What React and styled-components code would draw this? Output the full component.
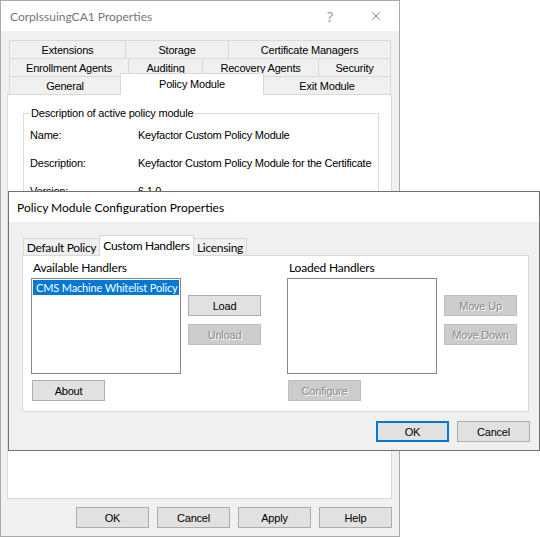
import React from "react";
import styled, { createGlobalStyle } from "styled-components";

const GlobalStyle = createGlobalStyle`
  html, body {
    margin: 0;
    padding: 0;
    background: #ffffff;
  }
  body {
    font-family: "Liberation Sans", Arial, sans-serif;
    font-size: 11px;
    letter-spacing: -0.2px;
    color: #000000;
  }
  *, *::before, *::after {
    box-sizing: border-box;
  }
`;

const uiFont = `"Lato", "Noto Sans", sans-serif`;
const formFont = `"Liberation Sans", Arial, sans-serif`;

const Desktop = styled.div`
  position: relative;
  width: 540px;
  height: 537px;
  overflow: hidden;
  background: #ffffff;
`;

const Window = styled.div`
  position: absolute;
  left: ${(p) => p.$x}px;
  top: ${(p) => p.$y}px;
  width: ${(p) => p.$w}px;
  height: ${(p) => p.$h}px;
  border: 1px solid ${(p) => (p.$active ? "#707070" : "#aaaaaa")};
  background: #f0f0f0;
  display: flex;
  flex-direction: column;
`;

const TitleBar = styled.div`
  flex: none;
  height: 30px;
  display: flex;
  align-items: center;
  padding-left: ${(p) => p.$indent}px;
  background: #ffffff;
  font-family: ${uiFont};
  font-size: 12px;
  letter-spacing: 0;
  color: ${(p) => (p.$active ? "#000000" : "#767676")};
`;

const TitleText = styled.span`
  flex: 1;
  white-space: nowrap;
`;

const CaptionButton = styled.div`
  width: 46px;
  height: 30px;
  display: flex;
  align-items: center;
  justify-content: center;
  color: #9a9a9a;
  font-family: "Noto Sans", sans-serif;
  font-size: 14px;
`;

const BackBody = styled.div`
  flex: 1;
  display: flex;
  flex-direction: column;
  padding: 9px 7px 8px 6px;
`;

const TabRows = styled.div`
  display: flex;
  flex-direction: column;
  margin: 0 1px 0 2px;
`;

const TabRow = styled.div`
  display: flex;
  align-items: flex-end;
  height: 18px;
`;

const Tab = styled.div`
  flex: ${(p) => (p.$w ? `0 0 ${p.$w}px` : "1 1 auto")};
  height: ${(p) => (p.$selected ? p.$h + 4 : p.$h)}px;
  margin-left: -1px;
  margin-bottom: ${(p) => (p.$selected ? -1 : 0)}px;
  padding-bottom: ${(p) => (p.$selected ? 2 : 0)}px;
  position: relative;
  z-index: ${(p) => (p.$selected ? 1 : 0)};
  display: flex;
  align-items: center;
  justify-content: center;
  overflow: hidden;
  border: 1px solid #d9d9d9;
  border-bottom: none;
  background: ${(p) => (p.$selected ? "#ffffff" : "#f0f0f0")};
  white-space: nowrap;
  font-family: ${(p) => (p.$ui ? uiFont : formFont)};
  font-size: ${(p) => (p.$ui ? 12 : 11)}px;
  letter-spacing: ${(p) => (p.$ui ? -0.3 : -0.2)}px;

  &:first-child {
    margin-left: 0;
  }
`;

const Panel = styled.div`
  flex: none;
  height: ${(p) => p.$h}px;
  background: #ffffff;
  border: 1px solid #d9d9d9;
  overflow: hidden;
  display: flex;
  flex-direction: column;
`;

const Group = styled.fieldset`
  margin: 12px 12px 0 15px;
  padding: 0 6px;
  height: 240px;
  min-width: 0;
  border: 1px solid #dcdcdc;
`;

const GroupLegend = styled.legend`
  padding: 0 1px;
  line-height: 13px;
`;

const InfoRow = styled.div`
  display: grid;
  grid-template-columns: 108px 1fr;
  line-height: 13px;
  margin-top: 15px;

  &:first-of-type {
    margin-top: 9px;
  }
`;

const InfoValue = styled.span`
  white-space: nowrap;
  letter-spacing: -0.25px;
`;

const ButtonRow = styled.div`
  display: flex;
  justify-content: flex-end;
  gap: 8px;
  margin-top: ${(p) => p.$top}px;
  margin-right: ${(p) => p.$right || 0}px;
`;

const Button = styled.button`
  flex: none;
  width: 73px;
  height: 21px;
  padding: 0;
  font-family: ${formFont};
  font-size: 11px;
  letter-spacing: -0.2px;
  background: ${(p) => (p.disabled ? "#cccccc" : "#e1e1e1")};
  border: ${(p) =>
    p.$primary ? "2px solid #0078d7" : `1px solid ${p.disabled ? "#bfbfbf" : "#adadad"}`};
  color: ${(p) => (p.disabled ? "#8b8b8b" : "#000000")};
  text-shadow: ${(p) => (p.disabled ? "1px 1px 0 #ffffff" : "none")};
`;

const FrontBody = styled.div`
  flex: 1;
  display: flex;
  flex-direction: column;
  padding: 13px 10px 8px 13px;
`;

const FrontTabs = styled.div`
  display: flex;
  align-items: flex-end;
  height: 20px;
  padding-left: 1px;
`;

const HandlerPane = styled.div`
  display: flex;
  gap: 26px;
  padding: 4px 0 0 8px;
`;

const HandlerSection = styled.div`
  display: flex;
  gap: 7px;
`;

const HandlerColumn = styled.div`
  display: flex;
  flex-direction: column;
  width: 150px;
`;

const HandlerLabel = styled.div`
  height: 16px;
  line-height: 16px;
  margin: 0 0 2px 2px;
  font-family: ${uiFont};
  font-size: 12px;
  letter-spacing: -0.2px;
  white-space: nowrap;
`;

const ListBox = styled.div`
  height: 96px;
  padding: 1px;
  background: #ffffff;
  border: 1px solid #828790;
`;

const ListItem = styled.div`
  height: 15px;
  line-height: 15px;
  padding-left: 3px;
  background: #0078d7;
  color: #ffffff;
  font-family: ${uiFont};
  font-size: 11px;
  letter-spacing: -0.15px;
  white-space: nowrap;
  overflow: hidden;
`;

const SideButtons = styled.div`
  display: flex;
  flex-direction: column;
  gap: 8px;
  padding-top: 35px;
`;

const UnderListButton = styled(Button)`
  margin: 6px 0 0 1px;
`;

const CloseGlyph = () => (
  <svg width="10" height="10" viewBox="0 0 10 10">
    <path d="M0.5 0.5 L9.5 9.5 M9.5 0.5 L0.5 9.5" stroke="#9a9a9a" strokeWidth="1" fill="none" />
  </svg>
);

const backTabs = [
  [
    { label: "Extensions", w: 117 },
    { label: "Storage", w: 104 },
    { label: "Certificate Managers" },
  ],
  [
    { label: "Enrollment Agents", w: 120 },
    { label: "Auditing", w: 75 },
    { label: "Recovery Agents", w: 117 },
    { label: "Security" },
  ],
  [
    { label: "General", w: 112 },
    { label: "Policy Module", w: 144, selected: true },
    { label: "Exit Module" },
  ],
];

const info = [
  ["Name:", "Keyfactor Custom Policy Module"],
  ["Description:", "Keyfactor Custom Policy Module for the Certificate"],
  ["Version:", "6.1.0"],
];

export default function App() {
  return (
    <Desktop>
      <GlobalStyle />
      <Window $x={0} $y={0} $w={400} $h={537}>
        <TitleBar $indent={9}>
          <TitleText>CorpIssuingCA1 Properties</TitleText>
          <CaptionButton>?</CaptionButton>
          <CaptionButton>
            <CloseGlyph />
          </CaptionButton>
        </TitleBar>
        <BackBody>
          <TabRows>
            {backTabs.map((row, i) => (
              <TabRow key={i}>
                {row.map((t) => (
                  <Tab key={t.label} $w={t.w} $h={18} $selected={t.selected}>
                    {t.label}
                  </Tab>
                ))}
              </TabRow>
            ))}
          </TabRows>
          <Panel $h={405}>
            <Group>
              <GroupLegend>Description of active policy module</GroupLegend>
              {info.map(([k, v]) => (
                <InfoRow key={k}>
                  <span>{k}</span>
                  <InfoValue>{v}</InfoValue>
                </InfoRow>
              ))}
            </Group>
          </Panel>
          <ButtonRow $top={8}>
            <Button>OK</Button>
            <Button>Cancel</Button>
            <Button>Apply</Button>
            <Button>Help</Button>
          </ButtonRow>
        </BackBody>
      </Window>

      <Window $x={8} $y={191} $w={532} $h={260} $active>
        <TitleBar $indent={8} $active>
          <TitleText>Policy Module Configuration Properties</TitleText>
        </TitleBar>
        <FrontBody>
          <FrontTabs>
            <Tab $ui $w={77} $h={17}>Default Policy</Tab>
            <Tab $ui $w={95} $h={17} $selected>Custom Handlers</Tab>
            <Tab $ui $w={54} $h={17}>Licensing</Tab>
          </FrontTabs>
          <Panel $h={157}>
            <HandlerPane>
              <HandlerSection>
                <HandlerColumn>
                  <HandlerLabel>Available Handlers</HandlerLabel>
                  <ListBox>
                    <ListItem>CMS Machine Whitelist Policy</ListItem>
                  </ListBox>
                  <UnderListButton>About</UnderListButton>
                </HandlerColumn>
                <SideButtons>
                  <Button>Load</Button>
                  <Button disabled>Unload</Button>
                </SideButtons>
              </HandlerSection>
              <HandlerSection>
                <HandlerColumn>
                  <HandlerLabel>Loaded Handlers</HandlerLabel>
                  <ListBox />
                  <UnderListButton disabled>Configure</UnderListButton>
                </HandlerColumn>
                <SideButtons>
                  <Button disabled>Move Up</Button>
                  <Button disabled>Move Down</Button>
                </SideButtons>
              </HandlerSection>
            </HandlerPane>
          </Panel>
          <ButtonRow $top={9} $right={-1}>
            <Button $primary>OK</Button>
            <Button>Cancel</Button>
          </ButtonRow>
        </FrontBody>
      </Window>
    </Desktop>
  );
}
